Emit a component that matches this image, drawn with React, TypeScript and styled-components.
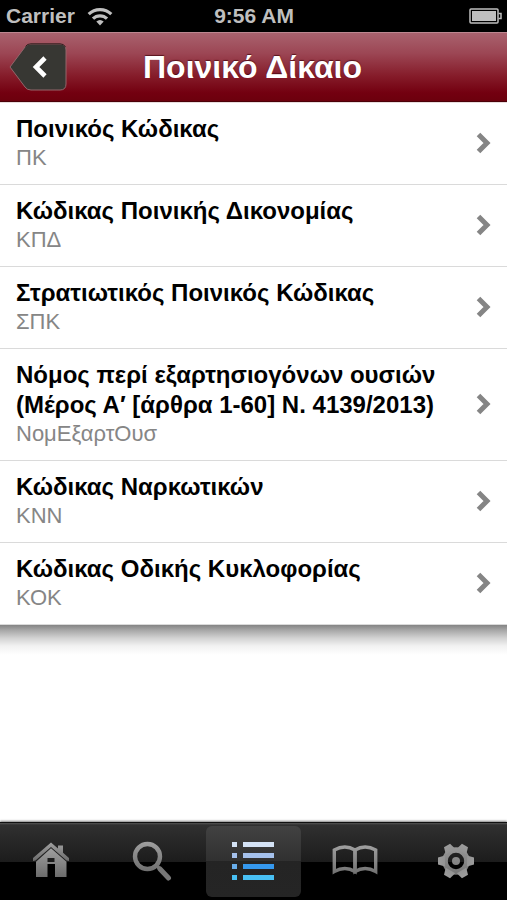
import React from "react";
import styled, { createGlobalStyle } from "styled-components";

const GlobalStyle = createGlobalStyle`
  * { box-sizing: border-box; }
  body {
    margin: 0;
    background: #fff;
    font-family: "Liberation Sans", Arial, Helvetica, sans-serif;
  }
`;

const Screen = styled.div`
  display: flex;
  flex-direction: column;
  min-height: 100vh;
  background: #fff;
`;

const StatusBar = styled.div`
  display: grid;
  grid-template-columns: 1fr auto 1fr;
  align-items: center;
  height: 32px;
  padding: 0 5px 0 6px;
  background: #000;
  color: #bfbfbf;
  font-size: 21px;
  font-weight: bold;
  line-height: 32px;
`;

const Carrier = styled.div`
  display: flex;
  align-items: center;
  gap: 12px;
`;

const Battery = styled.svg`
  justify-self: end;
`;

const Header = styled.header`
  display: grid;
  grid-template-columns: 60px 1fr 60px;
  align-items: center;
  height: 70px;
  padding: 0 10px 0 8px;
  border-top: 1px solid #bd8790;
  border-bottom: 1px solid #4b0008;
  background: linear-gradient(#a9626e 0%, #9c4654 30%, #861d2b 62%, #730010 88%, #6c000d 100%);
`;

const BackButton = styled.button`
  display: block;
  width: 60px;
  height: 50px;
  padding: 0;
  border: 0;
  background: none;
  cursor: pointer;

  svg { display: block; }
`;

const Title = styled.h1`
  margin: 0;
  color: #fff;
  font-size: 32px;
  line-height: 40px;
  text-align: center;
  text-shadow: 0 -1px 1px rgba(60, 0, 8, 0.7);
`;

const List = styled.ul`
  margin: 0;
  padding: 0;
  list-style: none;
  border-top: 1px solid #e8dddd;
  background: #fff;
`;

const ListShadow = styled.div`
  height: 30px;
  background: linear-gradient(#848484 0, #a6a6a6 5px, #d2d2d2 13px, #f2f2f2 21px, #fff 30px);
`;

const Item = styled.li`
  border-bottom: 1px solid #dadada;
`;

const RowLink = styled.a`
  display: flex;
  align-items: center;
  gap: 16px;
  padding: 11px 16px 13px;
  color: #000;
  text-decoration: none;

  svg { flex: none; }
`;

const RowText = styled.div`
  flex: 1;
`;

const RowTitle = styled.div`
  font-size: 24px;
  font-weight: bold;
  line-height: 30px;
`;

const RowCode = styled.div`
  color: #868686;
  font-size: 22px;
  line-height: 27px;
`;

const TabBar = styled.nav`
  display: grid;
  grid-template-columns: repeat(5, 1fr);
  height: 78px;
  margin-top: auto;
  padding: 3px 0;
  border-top: 1px solid #111;
  background: linear-gradient(#555 0, #303030 2px, #1c1c1c 39px, #000 39px);
  box-shadow: 0 -1px 2px rgba(0, 0, 0, 0.5);
`;

const Tab = styled.button<{ $active?: boolean }>`
  display: flex;
  align-items: center;
  justify-content: center;
  margin: 0 3px;
  padding: 0 0 2px;
  border: 0;
  border-radius: 6px;
  background: ${(p) => (p.$active ? "linear-gradient(#424242 0, #303030 35px, #242424 35px, #252525 100%)" : "none")};
  cursor: pointer;
`;

const laws = [
  { title: "Ποινικός Κώδικας", code: "ΠΚ" },
  { title: "Κώδικας Ποινικής Δικονομίας", code: "ΚΠΔ" },
  { title: "Στρατιωτικός Ποινικός Κώδικας", code: "ΣΠΚ" },
  { title: "Νόμος περί εξαρτησιογόνων ουσιών (Μέρος Α′ [άρθρα 1-60] Ν. 4139/2013)", code: "ΝομΕξαρτΟυσ" },
  { title: "Κώδικας Ναρκωτικών", code: "ΚΝΝ" },
  { title: "Κώδικας Οδικής Κυκλοφορίας", code: "ΚΟΚ" },
];

const Wifi = () => (
  <svg width="26" height="20" viewBox="0 0 26 20" fill="none" stroke="#bfbfbf" strokeWidth="3.2" aria-hidden="true">
    <path d="M1.700 8.200A16 16 0 0 1 24.300 8.200" />
    <path d="M6 12.700A9.900 9.900 0 0 1 20 12.700" />
    <path d="M9.300 15.600Q13 12.400 16.700 15.600L13 19.500Z" fill="#bfbfbf" stroke="none" />
  </svg>
);

const Chevron = () => (
  <svg width="15" height="22" viewBox="0 0 15 22" fill="none" stroke="#858585" strokeWidth="5" aria-hidden="true">
    <path d="M2.500 2.500L11 11L2.500 19.500" />
  </svg>
);

const gearTeeth = [30, 90, 150, 210, 270, 330];

const HomeIcon = () => (
  <svg width="38" height="38" viewBox="0 0 38 38" fill="url(#metal)" aria-hidden="true">
    <path d="M19 0.500L26 6.500V3.500H31V10.800L37 16V19L34.500 18.500L19 5L3.500 18.500L1 19V16Z" />
    <path fillRule="evenodd" d="M19 6.300L34.500 19.800V35H23V22H15.500V35H4V19.800ZM15.500 16V20H22.500V16Z" />
  </svg>
);

const SearchIcon = () => (
  <svg width="40" height="40" viewBox="0 0 40 40" fill="none" aria-hidden="true">
    <circle cx="15.500" cy="15.500" r="12.500" stroke="url(#metalStroke)" strokeWidth="4.400" />
    <path d="M24.500 24.500L29 29" stroke="#777" strokeWidth="3.500" />
    <path d="M28 28L36.500 37" stroke="#777" strokeWidth="5" strokeLinecap="round" />
  </svg>
);

const ListIcon = () => (
  <svg width="44" height="42" viewBox="0 0 44 42" aria-hidden="true">
    <path fill="#d4e2f5" d="M1 2h5v5H1zM12 2h31v5H12z" />
    <path fill="#a5c1ec" d="M1 13h5v5H1zM12 13h31v5H12z" />
    <path fill="#68adea" d="M1 24h5v5H1z" />
    <path fill="#3598ed" d="M12 24h31v5H12z" />
    <path fill="#48c0f4" d="M1 35h5v5H1zM12 35h31v5H12z" />
  </svg>
);

const BookIcon = () => (
  <svg width="46" height="32" viewBox="0 0 46 32" fill="none" stroke="url(#metalStroke)" strokeWidth="3.400" aria-hidden="true">
    <path d="M2.300 26.500V5Q13-1 23 5V26.500Q13 20.500 2.300 26.500Z" />
    <path d="M23 5Q33-1 43.700 5V26.500Q33 20.500 23 26.500Z" />
  </svg>
);

const GearIcon = () => (
  <svg width="36" height="36" viewBox="0 0 36 36" fill="url(#metalFill)" aria-hidden="true">
    <path
      fillRule="evenodd"
      d="M18 4.200A13.800 13.800 0 1 1 18 31.800A13.800 13.800 0 1 1 18 4.200ZM18 9.800A8.200 8.200 0 1 0 18 26.200A8.200 8.200 0 1 0 18 9.800Z"
    />
    {gearTeeth.map((angle) => (
      <path key={angle} d="M12.500 7L14.500 0H21.500L23.500 7Z" transform={`rotate(${angle} 18 18)`} />
    ))}
    <circle cx="18" cy="18" r="4" />
  </svg>
);

const Gradients = () => (
  <svg width="0" height="0" display="block" aria-hidden="true">
    <defs>
      <linearGradient id="metal" x1="0" y1="0" x2="0" y2="1">
        <stop offset="0" stopColor="#a0a0a0" />
        <stop offset="1" stopColor="#6c6c6c" />
      </linearGradient>
      <linearGradient id="metalStroke" x1="0" y1="0" x2="0" y2="30" gradientUnits="userSpaceOnUse">
        <stop offset="0" stopColor="#a0a0a0" />
        <stop offset="1" stopColor="#707070" />
      </linearGradient>
      <linearGradient id="metalFill" x1="0" y1="0" x2="0" y2="36" gradientUnits="userSpaceOnUse">
        <stop offset="0" stopColor="#9c9c9c" />
        <stop offset="1" stopColor="#707070" />
      </linearGradient>
    </defs>
  </svg>
);

const tabs = [
  { label: "Αρχική", icon: HomeIcon },
  { label: "Αναζήτηση", icon: SearchIcon },
  { label: "Λίστα", icon: ListIcon, active: true },
  { label: "Βιβλίο", icon: BookIcon },
  { label: "Ρυθμίσεις", icon: GearIcon },
];

export default function App() {
  return (
    <Screen>
      <GlobalStyle />
      <StatusBar>
        <Carrier>
          <span>Carrier</span>
          <Wifi />
        </Carrier>
        <span>9:56 AM</span>
        <Battery width="33" height="18" viewBox="0 0 33 18" aria-hidden="true">
          <rect x="1" y="2" width="28" height="14" rx="1" fill="none" stroke="#bfbfbf" strokeWidth="1.500" />
          <rect x="3" y="4" width="24" height="10" fill="#bfbfbf" />
          <path d="M29.500 6.500H32V11.500H29.500" fill="none" stroke="#bfbfbf" strokeWidth="1.500" />
        </Battery>
      </StatusBar>

      <Header>
        <BackButton type="button" aria-label="Πίσω">
          <svg width="60" height="50" viewBox="0 0 60 50" aria-hidden="true">
            <path
              d="M2 25L17 5Q19 2 23 2H52Q58 2 58 8V42Q58 48 52 48H23Q19 48 17 45Z"
              fill="#373733"
              stroke="#93666b"
            />
            <path d="M17.500 4.500Q19 1.800 23 1.800H52Q56 1.800 57.500 5" fill="none" stroke="#351a1c" />
            <path d="M37 16L28 25L37 34" fill="none" stroke="#fff" strokeWidth="4.600" />
          </svg>
        </BackButton>
        <Title>Ποινικό Δίκαιο</Title>
      </Header>

      <List>
        {laws.map((law) => (
          <Item key={law.code}>
            <RowLink href="#">
              <RowText>
                <RowTitle>{law.title}</RowTitle>
                <RowCode>{law.code}</RowCode>
              </RowText>
              <Chevron />
            </RowLink>
          </Item>
        ))}
      </List>
      <ListShadow />

      <TabBar>
        {tabs.map(({ label, icon: Icon, active }) => (
          <Tab key={label} type="button" aria-label={label} aria-current={active ? "page" : undefined} $active={active}>
            <Icon />
          </Tab>
        ))}
      </TabBar>
      <Gradients />
    </Screen>
  );
}
